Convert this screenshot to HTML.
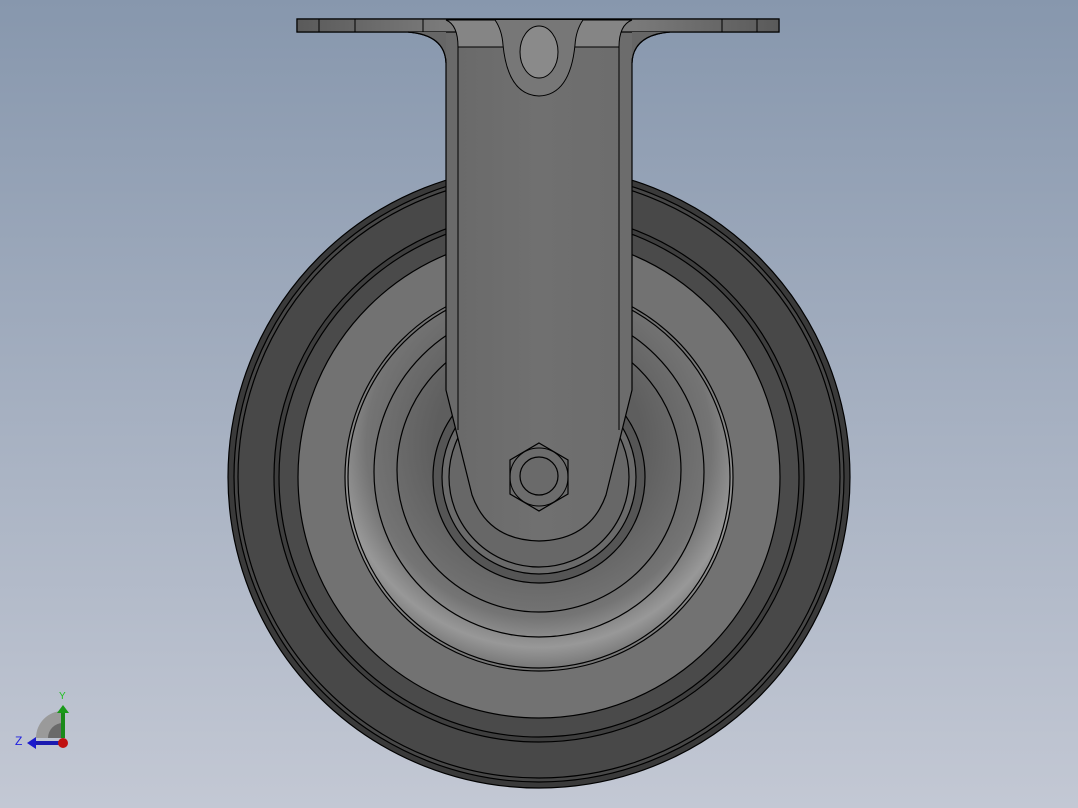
<!DOCTYPE html>
<html><head><style>
html,body{margin:0;padding:0;width:1078px;height:808px;overflow:hidden}
body{background:linear-gradient(#8797ad,#c3c8d4);font-family:"Liberation Sans",sans-serif}
svg{position:absolute;left:0;top:0}
</style></head><body>
<svg width="1078" height="808" viewBox="0 0 1078 808">
<defs>
<radialGradient id="dish" cx="539" cy="445" r="230" gradientUnits="userSpaceOnUse">
<stop offset="0.45" stop-color="#5e5e5e"/><stop offset="0.75" stop-color="#747474"/><stop offset="0.88" stop-color="#989898"/><stop offset="1" stop-color="#6e6e6e"/>
</radialGradient>
<linearGradient id="fork" x1="0" x2="1"><stop offset="0" stop-color="#5e5e5e"/><stop offset="0.5" stop-color="#707070"/><stop offset="1" stop-color="#666"/></linearGradient>
<linearGradient id="plate" x1="0" x2="1"><stop offset="0" stop-color="#5a5a5a"/><stop offset="0.3" stop-color="#7a7a7a"/><stop offset="0.7" stop-color="#7a7a7a"/><stop offset="1" stop-color="#5a5a5a"/></linearGradient>
</defs>
<g stroke="#000" stroke-width="1.2">
<circle cx="539" cy="477" r="311" fill="#3a3a3a"/>
<circle cx="539" cy="477" r="305" fill="#474747"/>
<circle cx="539" cy="477" r="301" fill="#484848"/>
<circle cx="539" cy="477" r="265" fill="#3e3e3e"/>
<circle cx="539" cy="477" r="260" fill="#4a4a4a"/>
<circle cx="539" cy="477" r="241" fill="#727272"/>
<circle cx="539" cy="477" r="194" fill="url(#dish)"/>
<circle cx="539" cy="477" r="191" fill="none"/>
<circle cx="539" cy="472" r="165" fill="none"/>
<circle cx="539" cy="470" r="142" fill="none"/>
<circle cx="539" cy="477" r="106" fill="#555"/>
<circle cx="539" cy="477" r="97" fill="#6a6a6a"/>
<circle cx="539" cy="477" r="90" fill="#676767"/>
</g>
<path d="M297 19H779V32H670Q633 35 632 63V390L606 495Q590 540 539 541Q488 540 472 495L446 390V63Q445 35 408 32H297Z" fill="url(#fork)" stroke="#000" stroke-width="1.2"/>
<rect x="297" y="19" width="482" height="13" fill="url(#plate)" stroke="#000" stroke-width="1.2"/>
<path d="M408 32Q445 35 446 63V32ZM670 32Q633 35 632 63V32Z" fill="#666"/>
<path d="M408 32Q445 35 446 63M670 32Q633 35 632 63" fill="none" stroke="#000" stroke-width="1.2"/>
<path d="M446 20Q458 25 458 47H619Q619 25 632 20Z" fill="#858585" stroke="#000" stroke-width="1"/>
<path d="M458 47V430M619 47V430M319 19V32M355 19V32M423 19V32M722 19V32M757 19V32" stroke="#000" stroke-width="1"/>
<path d="M495 20Q502 30 503 45Q508 95 539 96Q570 95 575 45Q576 30 583 20" fill="#777" stroke="#000" stroke-width="1"/>
<ellipse cx="539" cy="52" rx="19" ry="26" fill="#8a8a8a" stroke="#000" stroke-width="1"/>
<polygon points="539,443 568,460 568,494 539,511 510,494 510,460" fill="#6c6c6c" stroke="#000" stroke-width="1.2"/>
<circle cx="539" cy="477" r="29" fill="none" stroke="#000" stroke-width="1"/>
<circle cx="539" cy="476" r="19" fill="#6a6a6a" stroke="#000" stroke-width="1.2"/>
<path d="M36 738A27 27 0 0 1 63 711V738Z" fill="#9a9a9a"/>
<path d="M48 738A15 15 0 0 1 63 723V738Z" fill="#6a6a6a"/>
<path d="M63 738V712" stroke="#1a8a1a" stroke-width="4"/>
<polygon points="57,713 69,713 63,705" fill="#1a9a1a"/>
<path d="M63 743H36" stroke="#1a1ab0" stroke-width="4"/>
<polygon points="36,737 36,749 27,743" fill="#1a1acc"/>
<circle cx="63" cy="743" r="5" fill="#c01010"/>
<text x="59" y="699" font-size="10" fill="#20c020">Y</text>
<text x="15" y="745" font-size="12" fill="#2020e0">Z</text>
</svg>
</body></html>
